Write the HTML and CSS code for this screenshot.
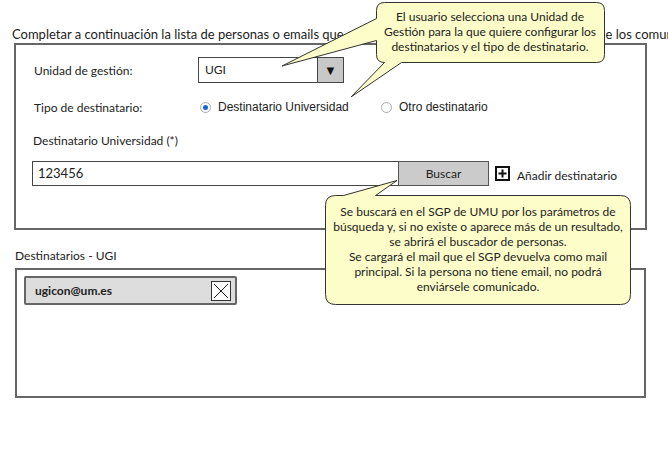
FILE: index.html
```html
<!DOCTYPE html>
<html lang="es">
<head>
    <meta charset="UTF-8">
    <meta name="viewport" content="width=device-width, initial-scale=1.0">
    <title>Destinatarios - UGI</title>
    <link rel="stylesheet" href="styles.css">
</head>
<body>
    <div class="page">
        <p class="intro">Completar a continuación la lista de personas o emails que se desea incluir como posibles destinatarios de los comunicados</p>

        <div class="panel">
            <div class="field-row">
                <span class="field-label">Unidad de gestión:</span>
                <div class="select">
                    <span class="select-value">UGI</span>
                    <span class="select-arrow">▼</span>
                </div>
            </div>
            <div class="field-row radio-row">
                <span class="field-label">Tipo de destinatario:</span>
                <label class="radio radio-first"><span class="radio-dot checked"></span>Destinatario Universidad</label>
                <label class="radio"><span class="radio-dot"></span>Otro destinatario</label>
            </div>
            <div class="sub-label">Destinatario Universidad (*)</div>
            <div class="search-row">
                <div class="text-input">123456</div>
                <div class="button">Buscar</div>
                <span class="add-icon">
                    <svg width="15" height="15" viewBox="0 0 15 15">
                        <rect x="1" y="1" width="13" height="13" fill="#fff" stroke="#111" stroke-width="2"/>
                        <path d="M7.5 3.5v8M3.5 7.5h8" stroke="#111" stroke-width="2"/>
                    </svg>
                </span>
                <span class="add-label">Añadir destinatario</span>
            </div>
        </div>

        <div class="list-title">Destinatarios - UGI</div>
        <div class="list-box">
            <div class="chip">
                <span class="chip-text">ugicon@um.es</span>
                <span class="chip-close">
                    <svg width="20" height="20" viewBox="0 0 20 20">
                        <rect x="0.5" y="0.5" width="19" height="19" fill="#fff" stroke="#333"/>
                        <path d="M3 3l14 14M17 3L3 17" stroke="#222" stroke-width="1"/>
                    </svg>
                </span>
            </div>
        </div>

        <!-- globos de comentario -->
        <svg class="callout-shapes" width="668" height="450" viewBox="0 0 668 450">
            <path d="M384.5 2.5H596.5Q604.5 2.5 604.5 10.5V54.5Q604.5 62.5 596.5 62.5H401.5L351 97L384.5 62.5Q376.5 62.5 376.5 54.5V40.5L282 66L376.5 18.5V10.5Q376.5 2.5 384.5 2.5Z"
                  fill="#fdfdc9" stroke="#333" stroke-width="1"/>
            <path d="M335.5 195.5H343.5L397 180.5L375.5 195.5H620.5Q630.5 195.5 630.5 205.5V294.5Q630.5 304.5 620.5 304.5H335.5Q325.5 304.5 325.5 294.5V205.5Q325.5 195.5 335.5 195.5Z"
                  fill="#fdfdc9" stroke="#333" stroke-width="1"/>
        </svg>
        <div class="callout-text callout-top">El usuario selecciona una Unidad de<br>Gestión para la que quiere configurar los<br>destinatarios y el tipo de destinatario.</div>
        <div class="callout-text callout-bottom">Se buscará en el SGP de UMU por los parámetros de<br>búsqueda y, si no existe o aparece más de un resultado,<br>se abrirá el buscador de personas.<br>Se cargará el mail que el SGP devuelva como mail<br>principal. Si la persona no tiene email, no podrá<br>enviársele comunicado.</div>
    </div>
</body>
</html>
```

FILE: styles.css
```css
/* Maqueta destinatarios */
body {
    margin: 0;
    font-family: Lato, "Liberation Sans", sans-serif;
    font-size: 12px;
    color: #222;
    background: #fff;
}
.page {
    position: relative;
    width: 668px;
    height: 450px;
    overflow: hidden;
}
.intro {
    margin: 0;
    padding: 26px 0 0 12px;
    font-size: 13px;
    line-height: 16px;
    white-space: nowrap;
    overflow: hidden;
}
.panel {
    box-sizing: border-box;
    height: 187px;
    margin: 1px 21px 0 14px;
    padding: 12px 0 0 18px;
    border: 2px solid #666;
}
.field-row {
    display: flex;
    align-items: center;
    height: 26px;
}
.field-label {
    width: 164px;
    flex: none;
}
.select {
    box-sizing: border-box;
    display: flex;
    width: 146px;
    height: 26px;
    border: 1px solid #444;
}
.select-value {
    flex: 1;
    padding-left: 6px;
    line-height: 24px;
}
.select-arrow {
    width: 25px;
    border-left: 1px solid #444;
    background: #c8c8c8;
    text-align: center;
    line-height: 24px;
    font-size: 13px;
    color: #111;
}
.radio-row {
    margin-top: 13px;
    height: 22px;
}
.radio {
    display: flex;
    align-items: center;
    font-family: "Liberation Sans", Arial, sans-serif;
    font-size: 12px;
}
.radio-first {
    width: 181px;
}
.radio-dot {
    box-sizing: border-box;
    width: 11px;
    height: 11px;
    margin: 0 7px 0 2px;
    border: 1px solid #aaa;
    border-radius: 50%;
    background: #fff;
    position: relative;
}
.radio-dot.checked::after {
    content: "";
    position: absolute;
    left: 2px;
    top: 2px;
    width: 5px;
    height: 5px;
    border-radius: 50%;
    background: #1565d8;
}
.sub-label {
    margin: 15px 0 0 -1px;
    line-height: 16px;
}
.search-row {
    display: flex;
    align-items: center;
    margin: 12px 0 0 -2px;
}
.text-input {
    box-sizing: border-box;
    width: 367px;
    height: 25px;
    padding-left: 5px;
    border: 1px solid #444;
    line-height: 23px;
    font-size: 13px;
}
.button {
    box-sizing: border-box;
    width: 91px;
    height: 25px;
    margin-left: -1px;
    border: 1px solid #555;
    background: #cbcbcb;
    text-align: center;
    line-height: 23px;
}
.add-icon {
    display: flex;
    margin-left: 6px;
}
.add-label {
    margin: 3px 0 0 7px;
}
.list-title {
    margin-top: 18px;
    padding-left: 15px;
    line-height: 16px;
}
.list-box {
    box-sizing: border-box;
    width: 631px;
    height: 130px;
    margin: 4px 0 0 15px;
    padding: 6px 0 0 7px;
    border: 2px solid #666;
}
.chip {
    box-sizing: border-box;
    display: flex;
    align-items: center;
    justify-content: space-between;
    width: 213px;
    height: 29px;
    padding: 0 4px 0 9px;
    border: 2px solid #666;
    border-radius: 2px;
    background: #ddd;
}
.chip-text {
    font-weight: bold;
}
.chip-close {
    display: flex;
}
.callout-shapes {
    position: absolute;
    left: 0;
    top: 0;
    pointer-events: none;
}
.callout-text {
    position: absolute;
    text-align: center;
    line-height: 15px;
    white-space: nowrap;
}
.callout-top {
    left: 376px;
    top: 9px;
    width: 228px;
}
.callout-bottom {
    left: 326px;
    top: 204px;
    width: 304px;
}
```
